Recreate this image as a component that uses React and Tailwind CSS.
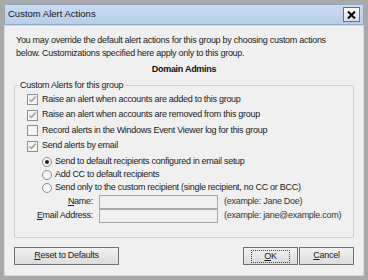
import React from 'react';

// Small Windows-style check box, drawn with a span and an svg tick
function Check({ checked }) {
  return (
    <span className="w-[11px] h-[11px] shrink-0 border border-[#8e8f8f] bg-[#f4f4f4] flex items-center justify-center">
      {checked && (
        <svg width="9" height="9" viewBox="0 0 9 9">
          <path d="M1.5 4.5 L3.5 6.5 L7.5 1.5" fill="none" stroke="#9a9a9a" strokeWidth="1.4" />
        </svg>
      )}
    </span>
  );
}

function Radio({ checked }) {
  return (
    <span className="w-[10px] h-[10px] shrink-0 rounded-full border border-[#8e8f8f] bg-[#f6f6f6] flex items-center justify-center">
      {checked && <span className="w-[4px] h-[4px] rounded-full bg-[#222]" />}
    </span>
  );
}

function Btn({ children, focused, className = '' }) {
  return (
    <div
      className={`h-[18px] border border-[#707070] bg-gradient-to-b from-[#f2f2f2] to-[#dcdcdc] flex items-center justify-center ${className}`}
    >
      <span className={focused ? 'px-[12px] leading-[11px] border border-dotted border-[#444]' : ''}>{children}</span>
    </div>
  );
}

const checks = [
  [true, 'Raise an alert when accounts are added to this group'],
  [true, 'Raise an alert when accounts are removed from this group'],
  [false, 'Record alerts in the Windows Event Viewer log for this group'],
  [true, 'Send alerts by email'],
];

const radios = [
  [true, 'Send to default recipients configured in email setup'],
  [false, 'Add CC to default recipients'],
  [false, 'Send only to the custom recipient (single recipient, no CC or BCC)'],
];

export default function App() {
  return (
    <div
      className="w-[368px] h-[280px] bg-[#a9a9a9] p-[4px] flex flex-col text-[9px] tracking-[-0.28px] whitespace-nowrap text-[#1a1a1a]"
      style={{ fontFamily: '"Liberation Sans", Arial, sans-serif' }}
    >
      {/* Title bar */}
      <div className="h-[21px] shrink-0 bg-gradient-to-b from-[#c9dcf0] to-[#b7cfe9] border border-[#8ea7c2] flex items-center justify-between pl-[3px] pr-[3px]">
        <span className="text-[9.5px] text-[#111] tracking-normal">Custom Alert Actions</span>
        <div className="w-[17px] h-[15px] border border-[#707070] bg-gradient-to-b from-[#fafafa] to-[#dedede] flex items-center justify-center">
          <svg width="9" height="8" viewBox="0 0 9 8">
            <path d="M1 0.5 L8 7.5 M8 0.5 L1 7.5" stroke="#000" strokeWidth="2" />
          </svg>
        </div>
      </div>

      {/* Body */}
      <div className="flex-1 bg-[#f0f0f0] border border-[#d8d8d8] flex flex-col px-[9px] pt-[8px] pb-[3px]">
        <p className="leading-[13px] pl-[2px]">
          You may override the default alert actions for this group by choosing custom actions
          <br />
          below. Customizations specified here apply only to this group.
        </p>
        <div className="text-center font-bold mt-[3px] leading-[13px] text-[#111]">Domain Admins</div>

        <fieldset className="mt-[3px] border border-[#d0d0d0] rounded-[2px] px-[12px] pb-[9px] h-[159px]">
          <legend className="px-[2px] ml-[-9px] leading-[12px]">Custom Alerts for this group</legend>
          <div className="flex flex-col gap-[4.5px] mt-[3px]">
            {checks.map(([c, t]) => (
              <div key={t} className="flex items-center gap-[4px] h-[11px]">
                <Check checked={c} />
                <span>{t}</span>
              </div>
            ))}
          </div>
          <div className="flex flex-col gap-[3px] mt-[5px] pl-[15px]">
            {radios.map(([c, t]) => (
              <div key={t} className="flex items-center gap-[3px] h-[10px]">
                <Radio checked={c} />
                <span>{t}</span>
              </div>
            ))}
          </div>
          <div className="grid grid-cols-[66px_119px_auto] gap-x-[6px] items-center mt-[2px]">
            <span className="text-right">
              <u>N</u>ame:
            </span>
            <div className="h-[14px] border border-[#a8a8a8] bg-[#f0f0f0]" />
            <span className="text-[#333]">(example: Jane Doe)</span>
            <span className="text-right">
              <u>E</u>mail Address:
            </span>
            <div className="h-[14px] border border-[#a8a8a8] bg-[#f0f0f0]" />
            <span className="text-[#333]">(example: jane@example.com)</span>
          </div>
        </fieldset>

        <div className="flex items-center mt-[9px]">
          <Btn className="w-[105px]">
            <u>R</u>eset to Defaults
          </Btn>
          <div className="flex-1" />
          <Btn focused className="w-[55px] mr-[1px]">
            <u>O</u>K
          </Btn>
          <Btn className="w-[55px]">
            <u>C</u>ancel
          </Btn>
        </div>
      </div>
    </div>
  );
}
